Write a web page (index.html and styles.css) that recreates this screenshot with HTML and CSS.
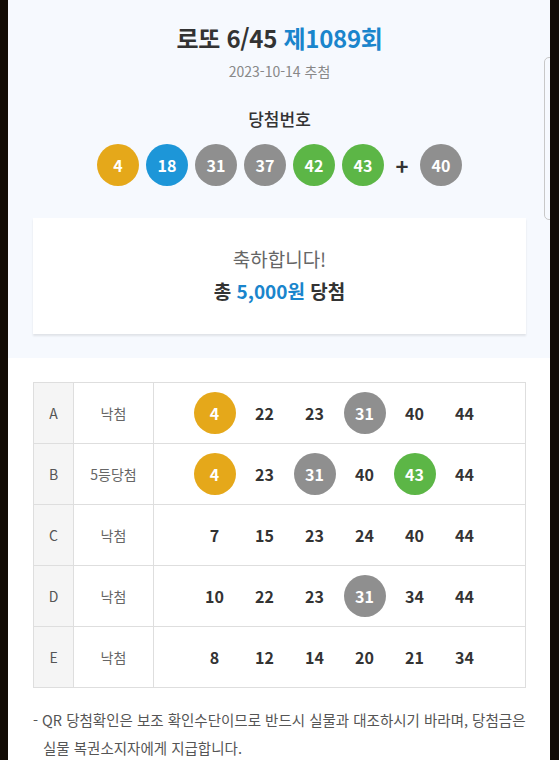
FILE: index.html
```html
<!DOCTYPE html>
<html lang="ko">
<head>
<meta charset="utf-8">
<link rel="stylesheet" href="styles.css">
</head>
<body>
<div class="screen">
  <section class="top">
    <h1 class="title">로또 6/45 <span class="blue">제1089회</span></h1>
    <p class="date">2023-10-14 추첨</p>
    <h2 class="sub">당첨번호</h2>
    <div class="balls">
      <span class="ball y">4</span>
      <span class="ball b">18</span>
      <span class="ball g">31</span>
      <span class="ball g">37</span>
      <span class="ball n">42</span>
      <span class="ball n">43</span>
      <span class="plus">+</span>
      <span class="ball g">40</span>
    </div>
    <div class="card">
      <p class="congrats">축하합니다!</p>
      <p class="total">총 <span class="blue">5,000원</span> 당첨</p>
    </div>
    <div class="scroll"></div>
  </section>
  <section class="bottom">
    <table class="tbl">
      <tr><td class="k">A</td><td class="r">낙첨</td><td class="nums"><div class="row"><span class="c"><span class="ball sm y">4</span></span><span class="c">22</span><span class="c">23</span><span class="c"><span class="ball sm g">31</span></span><span class="c">40</span><span class="c">44</span></div></td></tr>
      <tr><td class="k">B</td><td class="r">5등당첨</td><td class="nums"><div class="row"><span class="c"><span class="ball sm y">4</span></span><span class="c">23</span><span class="c"><span class="ball sm g">31</span></span><span class="c">40</span><span class="c"><span class="ball sm n">43</span></span><span class="c">44</span></div></td></tr>
      <tr><td class="k">C</td><td class="r">낙첨</td><td class="nums"><div class="row"><span class="c">7</span><span class="c">15</span><span class="c">23</span><span class="c">24</span><span class="c">40</span><span class="c">44</span></div></td></tr>
      <tr><td class="k">D</td><td class="r">낙첨</td><td class="nums"><div class="row"><span class="c">10</span><span class="c">22</span><span class="c">23</span><span class="c"><span class="ball sm g">31</span></span><span class="c">34</span><span class="c">44</span></div></td></tr>
      <tr><td class="k">E</td><td class="r">낙첨</td><td class="nums"><div class="row"><span class="c">8</span><span class="c">12</span><span class="c">14</span><span class="c">20</span><span class="c">21</span><span class="c">34</span></div></td></tr>
    </table>
    <p class="note">- QR 당첨확인은 보조 확인수단이므로 반드시 실물과 대조하시기 바라며, 당첨금은 실물 복권소지자에게 지급합니다.</p>
  </section>
</div>
</body>
</html>
```
FILE: styles.css
```css
html, body {
  margin: 0;
  padding: 0;
  background: #120b05;
  height: 760px;
  overflow: hidden;
}
.screen {
  margin: 0 9px 0 8px;
  background: #fff;
  height: 760px;
  overflow: hidden;
  font-family: "Noto Sans CJK KR", "Noto Sans", sans-serif;
  color: #333;
}
.top {
  position: relative;
  background: #f6f9fe;
  padding: 20px 24px 24px 25px;
  text-align: center;
}
.title {
  margin: 0;
  font-size: 24px;
  font-weight: 700;
  line-height: 36px;
  letter-spacing: -0.3px;
  color: #333;
}
.blue { color: #1a85cc; }
.date {
  margin: 4px 0 0;
  font-size: 14px;
  line-height: 22px;
  color: #888;
}
.sub {
  margin: 24px 0 0;
  font-size: 17px;
  font-weight: 500;
  line-height: 26px;
  color: #333;
}
.balls {
  margin-top: 12px;
  display: flex;
  justify-content: center;
  align-items: center;
  gap: 7px;
}
.ball {
  width: 42px;
  height: 42px;
  border-radius: 50%;
  display: inline-flex;
  align-items: center;
  justify-content: center;
  color: #fff;
  font-size: 16px;
  font-weight: 700;
  line-height: 1;
}
.ball.y { background: #e5a81a; }
.ball.b { background: #1d96d8; }
.ball.g { background: #8f8f8f; }
.ball.n { background: #5cb646; }
.plus {
  width: 22px;
  font-size: 22px;
  font-weight: 700;
  color: #333;
  line-height: 1;
}
.card {
  margin-top: 32px;
  background: #fff;
  box-shadow: 0 2px 2px rgba(0, 0, 0, 0.09);
  padding: 26px 0 28px;
}
.congrats {
  margin: 0;
  font-size: 19px;
  line-height: 30px;
  color: #666;
}
.total {
  margin: 2px 0 0;
  font-size: 19px;
  font-weight: 700;
  line-height: 30px;
  color: #333;
}
.scroll {
  position: absolute;
  right: -6px;
  top: 57px;
  width: 12px;
  height: 163px;
  border: 1px solid #c8c8c8;
  border-radius: 5px;
  box-sizing: border-box;
}
.bottom {
  padding: 24px 24px 0 25px;
}
.tbl {
  width: 100%;
  border-collapse: collapse;
  border: 1px solid #dedede;
}
.tbl td {
  border: 1px solid #dedede;
  height: 60px;
  padding: 0;
  text-align: center;
  font-size: 14px;
}
.tbl .k {
  width: 39px;
  background: #f5f5f5;
  color: #555;
}
.tbl .r {
  width: 79px;
  color: #666;
}
.row {
  display: flex;
  justify-content: center;
}
.c {
  width: 50px;
  display: flex;
  align-items: center;
  justify-content: center;
  font-size: 16px;
  font-weight: 700;
  color: #333;
  height: 42px;
}
.ball.sm { width: 42px; height: 42px; }
.note {
  margin: 18px 0 0;
  padding-left: 10px;
  text-indent: -10px;
  font-size: 14.5px;
  line-height: 28px;
  color: #555;
  letter-spacing: 0;
}
```
